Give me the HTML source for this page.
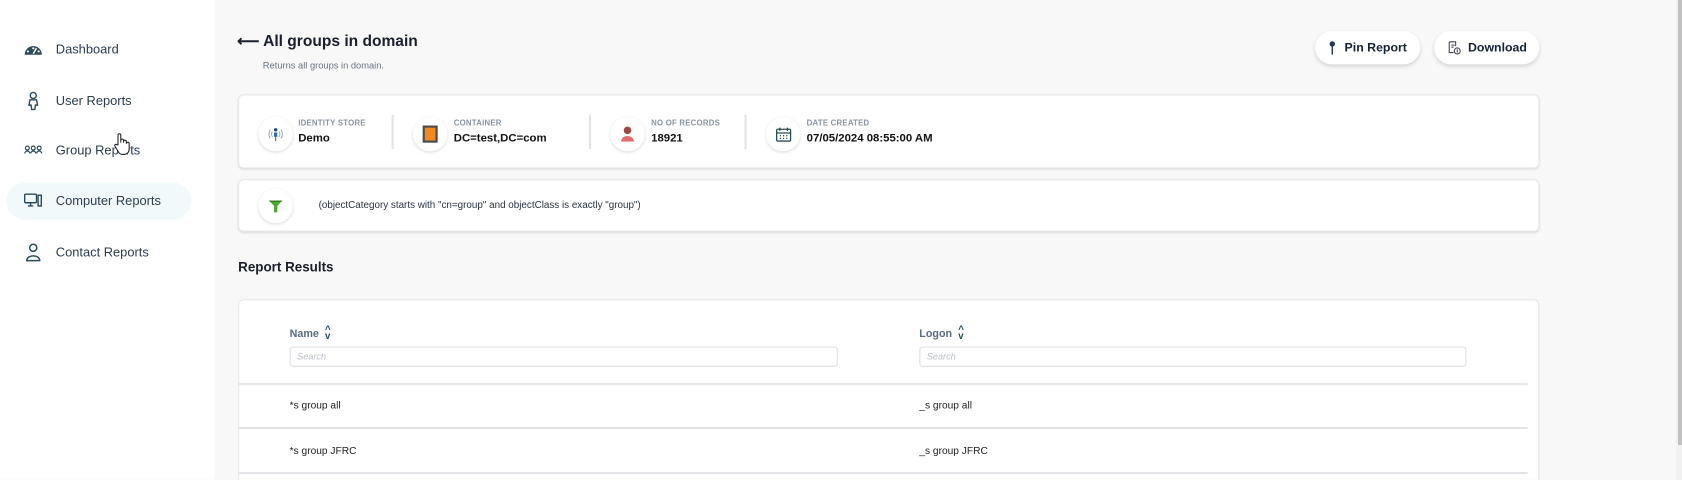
<!DOCTYPE html>
<html><head><meta charset="utf-8"><style>
*{margin:0;padding:0;box-sizing:border-box}
html,body{width:1682px;height:480px;overflow:hidden}
body{background:#f8f8f8;font-family:"Liberation Sans",sans-serif;color:#1a2233;position:relative}
#w{position:absolute;left:0;top:0;width:1568px;height:447px;overflow:hidden;transform:scale(1.07270);transform-origin:0 0}
.side{position:absolute;left:0;top:0;width:200px;height:448px;background:#fff}
.nav{position:absolute;left:22px;font-size:12px;color:#2d3c50;display:flex;align-items:center}
.nav svg{width:18px;height:18px;margin-right:12px}
.act{position:absolute;left:6px;top:170px;width:172px;height:35px;background:#f2f9fb;border-radius:18px}
.abs{position:absolute}
.card{position:absolute;background:#fff;border:1px solid #e6e8eb;border-radius:5px;box-shadow:0 1px 2px rgba(0,0,0,.12)}
.ic{position:absolute;width:32px;height:32px;border-radius:50%;background:#fff;box-shadow:0 1px 3px rgba(0,0,0,.15);display:flex;align-items:center;justify-content:center}
.lbl{position:absolute;font-size:7.3px;font-weight:bold;color:#8a94a3;letter-spacing:.2px}
.val{position:absolute;font-size:10.6px;font-weight:bold;color:#111}
.sep{position:absolute;top:107px;width:2px;height:32px;background:#e2e4e8}
.btn{position:absolute;top:29px;height:31px;background:#fff;border-radius:16px;box-shadow:0 2px 4px rgba(0,0,0,.15);font-size:11.5px;font-weight:bold;color:#16223a;display:flex;align-items:center;justify-content:center}
.th{position:absolute;font-size:10px;font-weight:bold;color:#5a6a80}
.srch{position:absolute;height:19px;border:1px solid #dcdfe3;border-radius:3px;font-size:8.5px;font-style:italic;color:#b8bec6;padding:3px 6px}
.line{position:absolute;left:222px;width:1202px;height:2px;background:#e4e6ea}
.td{position:absolute;font-size:9.5px;color:#222}
</style></head><body>
<div id="w">
<div class="side"></div>
<div class="act"></div>
<div class="nav" style="top:37px"><svg viewBox="0 0 18 18"><path d="M1 14a8 8 0 0 1 16 0z" fill="#2b4a5a"/><path d="M9 13l3-5" stroke="#fff" stroke-width="1.5"/><circle cx="4" cy="11" r="1" fill="#fff"/><circle cx="14" cy="11" r="1" fill="#fff"/><circle cx="9" cy="8" r="1" fill="#fff"/></svg>Dashboard</div>
<div class="nav" style="top:85px"><svg viewBox="0 0 18 18" fill="none" stroke="#2b4a5a" stroke-width="1.3"><circle cx="9" cy="4" r="2.8"/><path d="M6 8h6l1 5h-2l-.5 4h-3L7 13H5z"/></svg>User Reports</div>
<div class="nav" style="top:131px"><svg viewBox="0 0 18 18" fill="none" stroke="#2b4a5a" stroke-width="1.1"><circle cx="3.5" cy="7" r="1.8"/><circle cx="9" cy="7" r="1.8"/><circle cx="14.5" cy="7" r="1.8"/><path d="M1 12c1-3 4-3 5 0M6.5 12c1-3 4-3 5 0M12 12c1-3 4-3 5 0"/></svg>Group Reports</div>
<div class="nav" style="top:178px"><svg viewBox="0 0 18 18" fill="none" stroke="#2b4a5a" stroke-width="1.3"><rect x="1" y="3" width="11" height="8" rx="1"/><path d="M4 14h5M6.5 11v3"/><rect x="13.5" y="4" width="3" height="10"/></svg>Computer Reports</div>
<div class="nav" style="top:226px"><svg viewBox="0 0 18 18" fill="none" stroke="#2b4a5a" stroke-width="1.4"><circle cx="9" cy="5" r="3.3"/><path d="M3 17c0-6 12-6 12 0z"/></svg>Contact Reports</div>
<svg class="abs" style="left:106px;top:123px" width="16" height="22" viewBox="0 0 16 22" fill="#fff" stroke="#222" stroke-width="1"><path d="M4 12V3a1.3 1.3 0 0 1 2.6 0v7V8a1.3 1.3 0 0 1 2.6 0v2-1a1.3 1.3 0 0 1 2.6 0v2a1.3 1.3 0 0 1 2.6 0v5c0 3-2 5-5 5H8c-2 0-3-1-4-3l-3-5c-.5-1 1-2 2-1z"/></svg>

<div class="abs" style="left:221px;top:31px;font-size:14.5px;font-weight:bold;color:#1a1f2c">⟵ All groups in domain</div>
<div class="abs" style="left:245px;top:56px;font-size:8.7px;color:#6a7380">Returns all groups in domain.</div>
<div class="btn" style="left:1226px;width:98px"><svg width="8" height="13" viewBox="0 0 8 13" style="margin-right:7px"><circle cx="4" cy="3" r="2.5" fill="#1e3a48"/><path d="M4 5v8" stroke="#1e3a48" stroke-width="1.3"/></svg>Pin Report</div>
<div class="btn" style="left:1337px;width:98px"><svg width="13" height="13" viewBox="0 0 13 13" fill="none" stroke="#445" stroke-width="1"><path d="M2 1h6v4M2 1v10h4"/><path d="M4 4h3M4 6h2"/><circle cx="9.5" cy="9.5" r="2.8"/><path d="M9.5 8v3"/></svg><span style="margin-left:7px">Download</span></div>

<div class="card" style="left:222px;top:88px;width:1213px;height:69px"></div>
<div class="ic" style="left:241px;top:109px"><svg width="16" height="16" viewBox="0 0 16 16" fill="none"><path d="M3 4a7 7 0 0 0 0 8M13 4a7 7 0 0 1 0 8M5 5.5a4 4 0 0 0 0 5M11 5.5a4 4 0 0 1 0 5" stroke="#9aa" stroke-width="1"/><circle cx="8" cy="4" r="1.6" fill="#1e4a70"/><path d="M6.5 6.5h3v4h-1v4h-1v-4h-1z" fill="#2a6aa0"/></svg></div>
<div class="lbl" style="left:278px;top:110px">IDENTITY STORE</div><div class="val" style="left:278px;top:123px">Demo</div>
<div class="sep" style="left:365px"></div>
<div class="ic" style="left:385px;top:109px"><svg width="16" height="18" viewBox="0 0 16 18"><rect x="1" y="1" width="14" height="16" fill="#4a4a4a"/><rect x="3" y="3" width="10" height="12" fill="#f08a1e"/></svg></div>
<div class="lbl" style="left:423px;top:110px">CONTAINER</div><div class="val" style="left:423px;top:123px">DC=test,DC=com</div>
<div class="sep" style="left:549px"></div>
<div class="ic" style="left:569px;top:109px"><svg width="16" height="16" viewBox="0 0 16 16"><circle cx="8" cy="4.5" r="3.5" fill="#9a4848"/><path d="M2 15c0-7 12-7 12 0z" fill="#e07070"/></svg></div>
<div class="lbl" style="left:607px;top:110px">NO OF RECORDS</div><div class="val" style="left:607px;top:123px">18921</div>
<div class="sep" style="left:694px"></div>
<div class="ic" style="left:714px;top:109px"><svg width="15" height="15" viewBox="0 0 15 15" fill="none" stroke="#2b4a5a" stroke-width="1.2"><rect x="1" y="2.5" width="13" height="11" rx="1"/><path d="M1 6h13M4 1v3M11 1v3"/><path d="M4 8.5h1M7 8.5h1M10 8.5h1M4 11h1M7 11h1M10 11h1"/></svg></div>
<div class="lbl" style="left:752px;top:110px">DATE CREATED</div><div class="val" style="left:752px;top:123px">07/05/2024 08:55:00 AM</div>

<div class="card" style="left:222px;top:167px;width:1213px;height:49px"></div>
<div class="ic" style="left:241px;top:176px"><svg width="14" height="14" viewBox="0 0 14 14"><path d="M1 2h12l-4.5 5v6h-3V7z" fill="#4aa82a"/><path d="M1 2h12v1H1z" fill="#2a6a1a"/></svg></div>
<div class="abs" style="left:297px;top:186px;font-size:9.2px;color:#2a3344">(objectCategory starts with "cn=group" and objectClass is exactly "group")</div>

<div class="abs" style="left:222px;top:242px;font-size:12.5px;font-weight:bold;color:#1a1f2c">Report Results</div>

<div class="card" style="left:222px;top:279px;width:1213px;height:180px;box-shadow:none"></div>
<div class="th" style="left:270px;top:304px">Name <span style="display:inline-block;line-height:6px;font-size:9px;color:#2b4a5a;vertical-align:-2px;margin-left:3px">^<br>v</span></div>
<div class="srch" style="left:270px;top:323px;width:511px">Search</div>
<div class="th" style="left:857px;top:304px">Logon <span style="display:inline-block;line-height:6px;font-size:9px;color:#2b4a5a;vertical-align:-2px;margin-left:3px">^<br>v</span></div>
<div class="srch" style="left:857px;top:323px;width:510px">Search</div>
<div class="line" style="top:357px"></div>
<div class="td" style="left:270px;top:373px">*s group all</div><div class="td" style="left:857px;top:373px">_s group all</div>
<div class="line" style="top:398px"></div>
<div class="td" style="left:270px;top:415px">*s group JFRC</div><div class="td" style="left:857px;top:415px">_s group JFRC</div>
<div class="line" style="top:440px"></div>
</div>
<div class="abs" style="left:1676px;top:0;width:6px;height:480px;background:#f1f1f1"></div>
<div class="abs" style="left:1678px;top:0;width:4px;height:445px;background:#c1c1c1"></div>
</body></html>
